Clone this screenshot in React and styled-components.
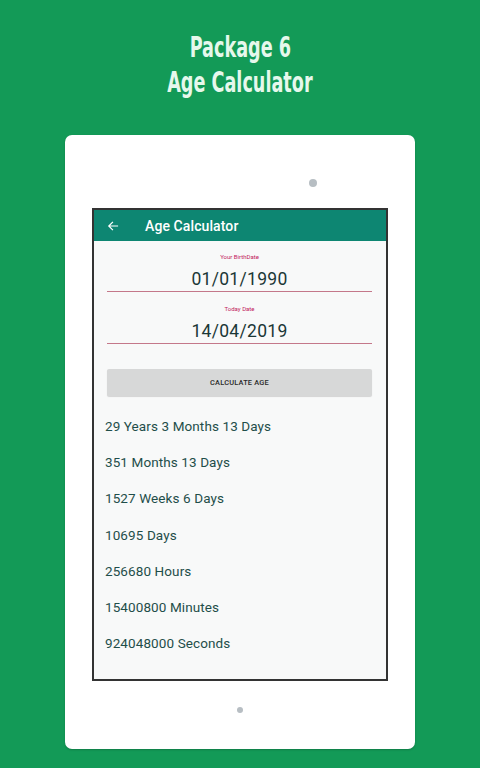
import styled, { createGlobalStyle } from 'styled-components'

const GlobalStyle = createGlobalStyle`
  html, body {
    margin: 0;
    padding: 0;
    background: #139a57;
  }
  body {
    font-family: Roboto, 'Liberation Sans', sans-serif;
  }
`

const Page = styled.div`
  width: 480px;
  height: 768px;
  background: #139a57;
  display: flex;
  flex-direction: column;
  align-items: center;
  overflow: hidden;
`

const Title = styled.h1`
  margin: 30px 0 0;
  display: flex;
  flex-direction: column;
  align-items: center;
  font-family: 'DejaVu Sans Condensed', 'DejaVu Sans', sans-serif;
  font-stretch: condensed;
  font-weight: 700;
  font-size: 28px;
  line-height: 35px;
  color: #e6f8ec;
`

// Oswald-like narrow title: squeeze the condensed face a bit more
const TitleLine = styled.span`
  display: inline-block;
  white-space: nowrap;
  transform: scaleX(0.7);
`

const Tablet = styled.div`
  margin-top: 35px;
  width: 350px;
  height: 614px;
  background: #fff;
  border-radius: 7px;
  box-shadow: 0 1px 2px rgba(0, 0, 0, 0.2);
  display: flex;
  flex-direction: column;
  align-items: center;
`

const Dot = styled.div`
  width: ${p => p.size}px;
  height: ${p => p.size}px;
  border-radius: 50%;
  background: #b7bec3;
  margin-top: ${p => p.top}px;
  align-self: ${p => p.align || 'center'};
  margin-left: ${p => p.left || 0}px;
`

const Screen = styled.div`
  margin-top: 21px;
  width: 296px;
  height: 473px;
  box-sizing: border-box;
  border: 2px solid #333;
  background: #f8f9f9;
  display: flex;
  flex-direction: column;
`

const AppBar = styled.div`
  height: 31px;
  background: #0d8672;
  display: flex;
  align-items: center;
  padding-left: 13px;
  color: #fff;
  font-size: 14px;
  font-weight: 500;
`

const BarTitle = styled.span`
  margin-left: 26px;
  letter-spacing: 0.1px;
`

const Form = styled.div`
  padding: 0 14px 0 13px;
  display: flex;
  flex-direction: column;
`

const Field = styled.div`
  margin-top: ${p => p.top}px;
  display: flex;
  flex-direction: column;
  align-items: center;
  border-bottom: 1px solid #c4788a;
`

const Label = styled.div`
  font-size: 6px;
  line-height: 10px;
  color: #c2185b;
`

const Value = styled.div`
  margin-top: 5px;
  font-size: 17.5px;
  line-height: 24px;
  color: #1b3736;
  letter-spacing: 0.3px;
`

const Button = styled.div`
  margin-top: 25px;
  height: 27px;
  background: #d7d8d8;
  border-radius: 2px;
  box-shadow: 0 1px 1px rgba(0, 0, 0, 0.15);
  display: flex;
  align-items: center;
  justify-content: center;
  font-size: 7.4px;
  font-weight: 500;
  color: #2a2a2a;
  letter-spacing: 0.2px;
`

const Results = styled.div`
  margin-top: 12px;
  padding-left: 11px;
  display: flex;
  flex-direction: column;
`

const Result = styled.div`
  font-size: 13.5px;
  line-height: 36.2px;
  color: #1f4e4a;
  letter-spacing: 0.1px;
`

const Arrow = () => (
  <svg width="12" height="12" viewBox="0 0 24 24" fill="none" stroke="#fff" strokeWidth="2.4" strokeLinecap="square">
    <path d="M21 12H4M11 4.5L3.5 12L11 19.5" />
  </svg>
)

const results = [
  '29 Years 3 Months 13 Days',
  '351 Months 13 Days',
  '1527 Weeks 6 Days',
  '10695 Days',
  '256680 Hours',
  '15400800 Minutes',
  '924048000 Seconds',
]

export default function App() {
  return (
    <Page>
      <GlobalStyle />
      <Title>
        <TitleLine>Package 6</TitleLine>
        <TitleLine>Age Calculator</TitleLine>
      </Title>
      <Tablet>
        <Dot size={8} top={44} align="flex-start" left={244} />
        <Screen>
          <AppBar>
            <Arrow />
            <BarTitle>Age Calculator</BarTitle>
          </AppBar>
          <Form>
            <Field top={11}>
              <Label>Your BirthDate</Label>
              <Value>01/01/1990</Value>
            </Field>
            <Field top={12}>
              <Label>Today Date</Label>
              <Value>14/04/2019</Value>
            </Field>
            <Button>CALCULATE AGE</Button>
          </Form>
          <Results>
            {results.map(r => (
              <Result key={r}>{r}</Result>
            ))}
          </Results>
        </Screen>
        <Dot size={6} top={26} />
      </Tablet>
    </Page>
  )
}
